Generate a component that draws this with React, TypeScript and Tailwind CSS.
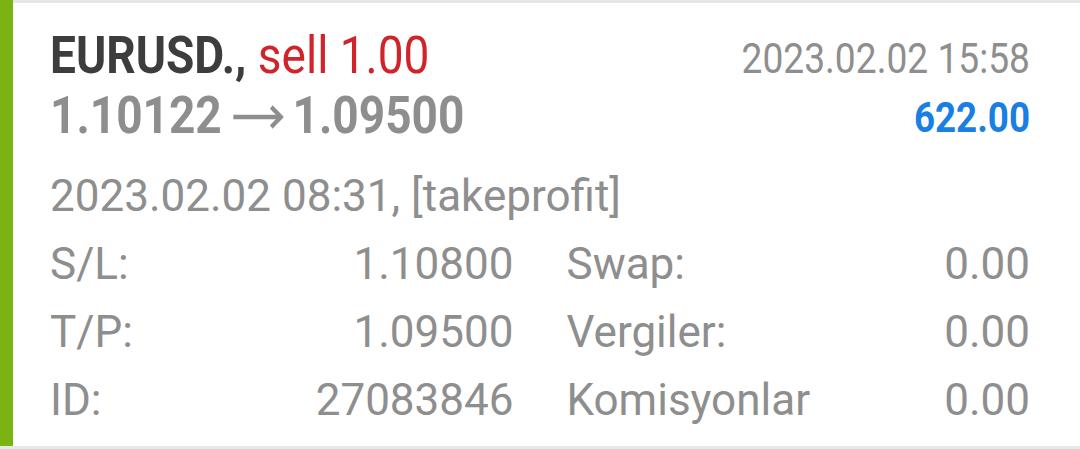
import React from "react";

const rows = [
  { l: "S/L:", v: "1.10800", l2: "Swap:", v2: "0.00" },
  { l: "T/P:", v: "1.09500", l2: "Vergiler:", v2: "0.00" },
  { l: "ID:", v: "27083846", l2: "Komisyonlar", v2: "0.00" },
];

export default function App() {
  return (
    <div className="w-[1080px] h-[449px] flex flex-col bg-white font-['Roboto',sans-serif]">
      <div className="flex-1 flex">
        {/* green side bar */}
        <div className="w-[13px] bg-[#7bb313]" />

        <div className="flex-1 border-t-[3px] border-[#e6e6e6] pl-[37px] pr-[50px] pt-[23px]">
          {/* header */}
          <div className="flex justify-between">
            <div className="text-[52px] leading-[60px] font-bold">
              <div className="origin-left scale-x-[0.885] whitespace-nowrap">
                <span className="text-[#3d3d3d]">EURUSD.,</span>{" "}
                <span className="text-[#d1232a] font-normal">sell 1.00</span>
              </div>
              <div className="origin-left scale-x-[0.885] whitespace-nowrap text-[#8e8e8e] flex items-center">
                <span>1.10122</span>
                <svg width="57" height="24" viewBox="0 0 57 24" className="ml-[13px] mr-[10px] mt-[2px]" fill="none" stroke="#8e8e8e" strokeWidth="4.5">
                  <path d="M0 12H54" />
                  <path d="M43 2L54 12L43 22" />
                </svg>
                <span>1.09500</span>
              </div>
            </div>
            <div className="text-right leading-[60px] text-[42px]">
              <div className="origin-right scale-x-[0.885] whitespace-nowrap text-[#8e8e8e] pt-[3px]">
                2023.02.02 15:58
              </div>
              <div className="origin-right scale-x-[0.875] whitespace-nowrap font-bold text-[#1a7fe2] -mt-[1px]">
                622.00
              </div>
            </div>
          </div>

          {/* details */}
          <div className="mt-[14px] text-[44px] leading-[68px] text-[#8e8e8e] whitespace-nowrap">
            2023.02.02 08:31, [takeprofit]
          </div>
          <div className="grid grid-cols-2 gap-x-[53px] text-[44px] leading-[68px] text-[#8e8e8e]">
            {rows.map((r) => (
              <React.Fragment key={r.l}>
                <div className="flex justify-between">
                  <span>{r.l}</span>
                  <span>{r.v}</span>
                </div>
                <div className="flex justify-between">
                  <span>{r.l2}</span>
                  <span>{r.v2}</span>
                </div>
              </React.Fragment>
            ))}
          </div>
        </div>
      </div>
      <div className="h-[3px] bg-[#e8e8e8]" />
    </div>
  );
}
